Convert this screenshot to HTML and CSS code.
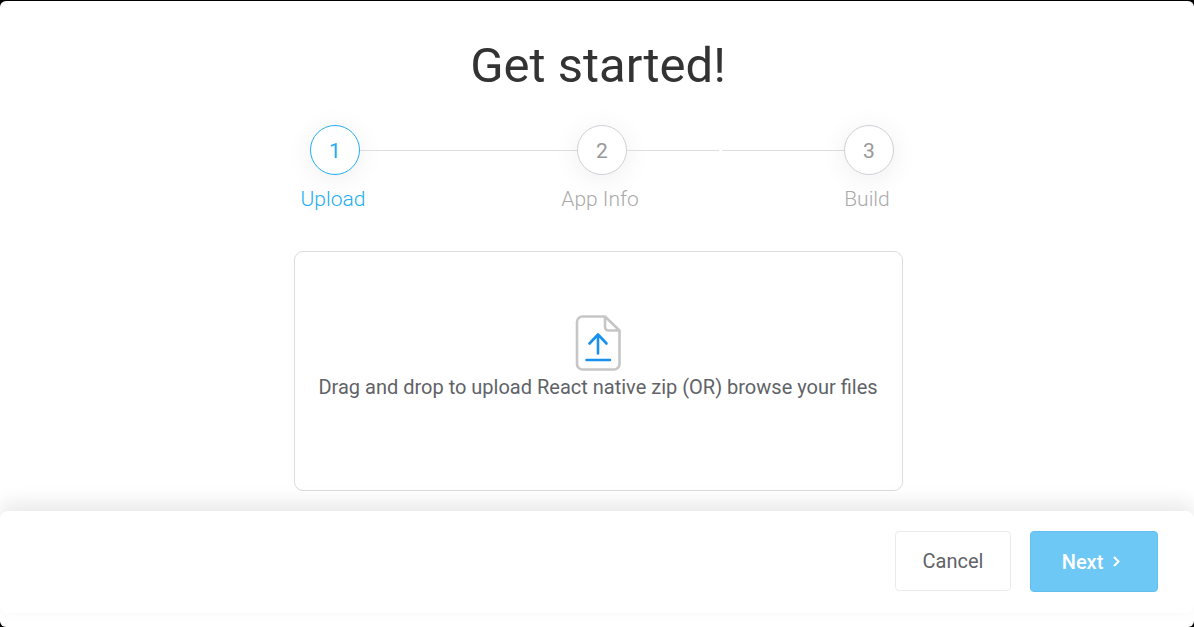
FILE: index.html
```html
<!DOCTYPE html>
<html lang="en">
<head>
<meta charset="utf-8">
<meta name="viewport" content="width=device-width, initial-scale=1">
<title>Get started</title>
<link rel="stylesheet" href="styles.css">
</head>
<body>
<div class="modal">
  <main class="content">
    <h1 class="title">Get started!</h1>
    <ol class="steps">
      <li class="step step-active" aria-current="step">
        <span class="step-number">1</span>
        <span class="step-label">Upload</span>
      </li>
      <li class="connector" aria-hidden="true"><span class="line"></span></li>
      <li class="step">
        <span class="step-number">2</span>
        <span class="step-label">App Info</span>
      </li>
      <li class="connector connector-split" aria-hidden="true"><span class="line"></span><span class="line line-long"></span></li>
      <li class="step">
        <span class="step-number">3</span>
        <span class="step-label">Build</span>
      </li>
    </ol>
    <button type="button" class="dropzone">
      <svg class="file-icon" width="46" height="56" viewBox="0 0 46 56" fill="none" stroke-width="2.6" stroke-linecap="round" stroke-linejoin="round" aria-hidden="true">
        <path stroke="#c6c6c6" d="M30 1.500H7.500A5.500 5.500 0 0 0 2 7v42A5.500 5.500 0 0 0 7.500 54.500H39A5.500 5.500 0 0 0 44.500 49V15.500zM30 1.500V12a3.500 3.500 0 0 0 3.500 3.500h11"/>
        <path stroke="#1890f0" d="M23 38.500V19.500M14.500 28.500L23 19.500l8.500 9M11.500 45H35"/>
      </svg>
      <span class="dropzone-text">Drag and drop to upload React native zip (OR) browse your files</span>
    </button>
  </main>
  <footer class="footer">
    <button type="button" class="button button-cancel">Cancel</button>
    <button type="button" class="button button-next">Next
      <svg width="7" height="11" viewBox="0 0 7 11" fill="none" stroke="currentColor" stroke-width="2" aria-hidden="true"><path d="M1 1l4.500 4.500L1 10"/></svg>
    </button>
  </footer>
</div>
</body>
</html>
```
FILE: styles.css
```css
* {
  box-sizing: border-box;
}

body {
  margin: 0;
  background: #000;
  font-family: Roboto, "Liberation Sans", sans-serif;
}

.modal {
  display: flex;
  flex-direction: column;
  min-height: calc(100vh - 1px);
  margin-top: 1px;
  padding-bottom: 14px;
  background: #fff;
  border-radius: 6px;
  overflow: hidden;
}

.content {
  display: flex;
  flex: 1;
  flex-direction: column;
  align-items: center;
  padding: 37px 16px 19px;
}

.title {
  margin: 0 0 0 2px;
  color: #333;
  font-size: 49px;
  font-weight: 400;
  line-height: 56px;
}

.steps {
  display: flex;
  width: 100%;
  max-width: 616px;
  margin: 31px 0 0 10px;
  padding: 0;
  list-style: none;
}

.step {
  display: flex;
  flex: none;
  flex-direction: column;
  align-items: center;
  width: 82px;
  color: #999;
}

.step-number {
  display: flex;
  align-items: center;
  justify-content: center;
  width: 50px;
  height: 50px;
  padding-top: 2px;
  background: #fff;
  border: 1px solid #ced1d6;
  border-radius: 50%;
  box-shadow: 0 4px 28px rgba(0, 0, 0, 0.07);
  font-size: 21px;
  font-weight: 400;
}

.step-label {
  margin-top: 12px;
  padding-right: 4px;
  color: #aaa;
  font-size: 21px;
  font-weight: 300;
  line-height: 24px;
  white-space: nowrap;
}

.step-active .step-number {
  border-color: #22aef0;
}

.step-active .step-number,
.step-active .step-label {
  color: #22aef0;
}

.connector {
  display: flex;
  flex: 1;
  gap: 3px;
  margin: 25px -16px 0;
}

.line {
  flex: 1;
  height: 1px;
  background: #dedede;
}

.connector-split .line {
  flex: 3;
}

.connector-split .line-long {
  flex: 4;
}

.dropzone {
  display: flex;
  flex-direction: column;
  align-items: center;
  justify-content: center;
  width: 100%;
  max-width: 609px;
  min-height: 240px;
  margin: 40px 0 0 2px;
  padding: 24px 16px 52px;
  background: #fff;
  border: 1px solid #dcdcdc;
  border-radius: 9px;
  color: #5f6368;
  font: inherit;
  cursor: pointer;
}

.dropzone-text {
  margin-top: 4px;
  font-size: 20px;
  line-height: 24px;
}

.footer {
  display: flex;
  align-items: flex-start;
  justify-content: flex-end;
  gap: 19px;
  padding: 20px 36px 21px;
  background: #fff;
  border-radius: 8px;
  box-shadow: 0 -8px 20px rgba(0, 0, 0, 0.09);
}

.button {
  display: flex;
  align-items: center;
  justify-content: center;
  height: 60px;
  border: 1px solid #ebebeb;
  border-radius: 4px;
  background: #fff;
  color: #5f6368;
  font-family: inherit;
  font-size: 20px;
  cursor: pointer;
}

.button-cancel {
  width: 116px;
}

.button-next {
  gap: 10px;
  width: 128px;
  height: 61px;
  padding: 0 12px 0 6px;
  border-color: #62c0f0;
  background: #6ec8f5;
  color: #fff;
  font-weight: 500;
}
```
